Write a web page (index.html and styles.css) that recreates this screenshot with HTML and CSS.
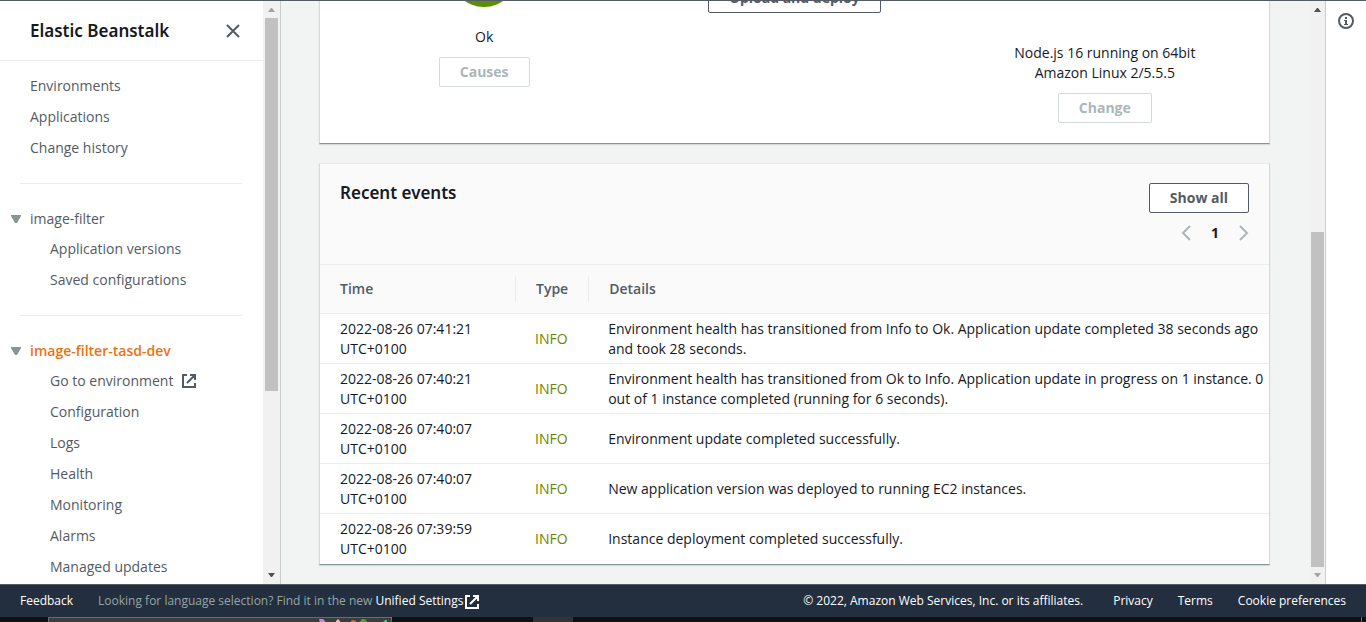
FILE: index.html
```html
<!DOCTYPE html>
<html lang="en">
<head>
<meta charset="utf-8">
<title>Elastic Beanstalk</title>
<link rel="stylesheet" href="styles.css">
</head>
<body>
<div class="workspace">
  <nav class="sidebar" aria-label="Elastic Beanstalk">
    <header class="sidebar-head">
      <a class="service" href="#">Elastic Beanstalk</a>
      <button class="icon-button" type="button" aria-label="Close navigation">
        <svg width="16" height="16" viewBox="0 0 16 16"><path d="M2 2l12 12M14 2L2 14" fill="none" stroke="#545b64" stroke-width="2"/></svg>
      </button>
    </header>
    <ul class="links top-links">
      <li><a href="#">Environments</a></li>
      <li><a href="#">Applications</a></li>
      <li><a href="#">Change history</a></li>
    </ul>
    <hr class="divider">
    <section class="group">
      <div class="group-head"><svg class="caret" width="10" height="8" viewBox="0 0 10 8"><path d="M0 0h10v1L6 8H4L0 1z" fill="#879596"/></svg><a href="#">image-filter</a></div>
      <ul class="links">
        <li><a href="#">Application versions</a></li>
        <li><a href="#">Saved configurations</a></li>
      </ul>
    </section>
    <hr class="divider">
    <section class="group">
      <div class="group-head"><svg class="caret" width="10" height="8" viewBox="0 0 10 8"><path d="M0 0h10v1L6 8H4L0 1z" fill="#879596"/></svg><a class="active" href="#">image-filter-tasd-dev</a></div>
      <ul class="links">
        <li><a class="external" href="#">Go to environment
          <svg width="16" height="16" viewBox="0 0 16 16" fill="none" stroke="#545b64" stroke-width="2"><path d="M6 2H2v12h12v-4M9 2h5v5M14 2L6 10"/></svg></a></li>
        <li><a href="#">Configuration</a></li>
        <li><a href="#">Logs</a></li>
        <li><a href="#">Health</a></li>
        <li><a href="#">Monitoring</a></li>
        <li><a href="#">Alarms</a></li>
        <li><a href="#">Managed updates</a></li>
      </ul>
    </section>
  </nav>
  <div class="scrollbar side-bar" aria-hidden="true">
    <svg width="7" height="4" viewBox="0 0 7 4"><path d="M0 4h7L4 0H3z" fill="#a3a3a3"/></svg>
    <div class="track"><div class="thumb side-thumb"></div></div>
    <svg width="7" height="4" viewBox="0 0 7 4"><path d="M0 0h7L4 4H3z" fill="#505050"/></svg>
  </div>

  <main class="content">
    <section class="card overview">
      <div class="stat">
        <svg class="status" width="66" height="66" viewBox="0 0 66 66"><circle cx="33" cy="33" r="33" fill="#5a8f00"/></svg>
        <p class="status-text">Ok</p>
        <button class="button" type="button" disabled>Causes</button>
      </div>
      <div class="stat version">
        <button class="button" type="button">Upload and deploy</button>
      </div>
      <div class="stat platform">
        <p>Node.js 16 running on 64bit<br>Amazon Linux 2/5.5.5</p>
        <button class="button" type="button" disabled>Change</button>
      </div>
    </section>

    <section class="card events">
      <header class="events-head">
        <h2>Recent events</h2>
        <div class="actions">
          <button class="button" type="button">Show all</button>
          <div class="pager">
            <button class="icon-button" type="button" aria-label="Previous page"><svg width="10" height="16" viewBox="0 0 10 16"><path d="M9 1L2 8l7 7" fill="none" stroke="#aab7b8" stroke-width="2"/></svg></button>
            <button class="page" type="button">1</button>
            <button class="icon-button" type="button" aria-label="Next page"><svg width="10" height="16" viewBox="0 0 10 16"><path d="M1 1l7 7-7 7" fill="none" stroke="#aab7b8" stroke-width="2"/></svg></button>
          </div>
        </div>
      </header>
      <table>
        <thead>
          <tr><th class="time"><span>Time</span></th><th class="type"><span>Type</span></th><th><span>Details</span></th></tr>
        </thead>
        <tbody>
          <tr><td>2022-08-26 07:41:21<br>UTC+0100</td><td class="info">INFO</td><td>Environment health has transitioned from Info to Ok. Application update completed 38 seconds ago and took 28 seconds.</td></tr>
          <tr><td>2022-08-26 07:40:21<br>UTC+0100</td><td class="info">INFO</td><td>Environment health has transitioned from Ok to Info. Application update in progress on 1 instance. 0 out of 1 instance completed (running for 6 seconds).</td></tr>
          <tr><td>2022-08-26 07:40:07<br>UTC+0100</td><td class="info">INFO</td><td>Environment update completed successfully.</td></tr>
          <tr><td>2022-08-26 07:40:07<br>UTC+0100</td><td class="info">INFO</td><td>New application version was deployed to running EC2 instances.</td></tr>
          <tr><td>2022-08-26 07:39:59<br>UTC+0100</td><td class="info">INFO</td><td>Instance deployment completed successfully.</td></tr>
        </tbody>
      </table>
    </section>
  </main>
  <div class="scrollbar main-bar" aria-hidden="true">
    <svg width="7" height="4" viewBox="0 0 7 4"><path d="M0 4h7L4 0H3z" fill="#505050"/></svg>
    <div class="track end"><div class="thumb main-thumb"></div></div>
    <svg width="7" height="4" viewBox="0 0 7 4"><path d="M0 0h7L4 4H3z" fill="#a3a3a3"/></svg>
  </div>
  <aside class="tools">
    <button class="icon-button" type="button" aria-label="Info">
      <svg width="16" height="16" viewBox="0 0 16 16"><circle cx="8" cy="8" r="7" fill="none" stroke="#545b64" stroke-width="2"/><path d="M7 4h2v2H7zM6 7h3v4h1v1H6v-1h1V8H6z" fill="#545b64"/></svg>
    </button>
  </aside>
</div>

<footer class="footer">
  <a class="feedback" href="#">Feedback</a>
  <p class="language">Looking for language selection? Find it in the new <a href="#">Unified Settings<svg width="16" height="16" viewBox="0 0 16 16" fill="none" stroke="#fff" stroke-width="2"><path d="M6 2H2v12h12v-4M9 2h5v5M14 2L6 10"/></svg></a></p>
  <p class="copyright">© 2022, Amazon Web Services, Inc. or its affiliates.</p>
  <a href="#">Privacy</a>
  <a href="#">Terms</a>
  <a href="#">Cookie preferences</a>
</footer>
<div class="taskbar" aria-hidden="true">
  <div class="search"><svg width="72" height="5" viewBox="0 0 72 5"><path d="M0 1h4l2 2v2H1z" fill="#d67be0"/><path d="M17 5V3l2-2 2 2v2z" fill="#f2b8a0"/><path d="M32 5V3l2-1 3 1v2z" fill="#d9702b"/><path d="M40 5l3-4h3l3 4z" fill="#4fa51f"/><path d="M63 5l3-3h2v3z" fill="#3fbf72"/></svg></div>
  <div class="task"></div>
  <div class="peek"></div>
</div>
</body>
</html>
```
FILE: styles.css
```css
* { box-sizing: border-box; }

body {
  margin: 0;
  height: 100vh;
  display: flex;
  flex-direction: column;
  overflow: hidden;
  font: 14px/20px "Open Sans", "Noto Sans", sans-serif;
  color: #16191f;
  background: #fff;
}

p, h2, ul { margin: 0; padding: 0; }
ul { list-style: none; }
svg { display: block; flex: none; }
a { color: inherit; text-decoration: none; }
button { font: inherit; color: inherit; }

.icon-button {
  display: flex;
  padding: 0;
  border: 0;
  background: none;
}

.workspace {
  flex: 1;
  min-height: 0;
  display: flex;
  border-top: 1px solid #545b64;
}

/* Navigation */
.sidebar {
  flex: none;
  width: 263px;
  overflow: hidden;
  color: #545b64;
}

.sidebar-head {
  display: flex;
  align-items: center;
  justify-content: space-between;
  height: 60px;
  padding: 0 22px 0 30px;
  border-bottom: 1px solid #eaeded;
}

.service {
  font-family: "Noto Sans", sans-serif;
  font-size: 17px;
  font-weight: 600;
  color: #16191f;
}

.links {
  display: grid;
  gap: 11px;
}

.top-links { padding: 15px 30px 25px; }

.divider {
  margin: 0 21px 0 20px;
  border: 0;
  border-top: 1px solid #eaeded;
}

.group { padding: 25px 0; }
.group .links { padding: 10px 0 0 50px; }

.group-head {
  display: flex;
  align-items: center;
  gap: 9px;
  padding-left: 11px;
}

.active {
  font-weight: 600;
  color: #ec7211;
}

.external {
  display: flex;
  align-items: center;
  gap: 8px;
}

/* Scrollbars */
.scrollbar {
  flex: none;
  display: flex;
  flex-direction: column;
  align-items: center;
  gap: 6px;
  padding: 7px 0;
  background: #f1f1f1;
}

.side-bar {
  width: 18px;
  border-right: 1px solid #c8cdcd;
}

.main-bar {
  width: 16px;
  border-right: 1px solid #c8cdcd;
}

.track {
  flex: 1;
  display: flex;
  flex-direction: column;
}

.track.end { justify-content: flex-end; }

.thumb {
  width: 13px;
  background: #c1c1c1;
}

.side-thumb { height: 68%; }
.main-thumb { height: 61%; }

.tools {
  flex: none;
  width: 40px;
  padding: 12px;
}

/* Content */
.content {
  flex: 1;
  min-width: 0;
  display: flex;
  flex-direction: column;
  justify-content: flex-end;
  gap: 19px;
  padding: 0 40px 19px 38px;
  overflow: hidden;
  background: #f2f3f3;
}

.card {
  flex: none;
  border: 1px solid #d5dbdb;
  border-top-color: #eaeded;
  border-bottom-color: #879596;
  box-shadow: 0 1px 1px #d5dbdb;
  background: #fff;
}

.overview {
  display: grid;
  grid-template-columns: repeat(3, 1fr);
  gap: 22px;
  align-items: start;
  padding: 20px;
}

.stat {
  display: flex;
  flex-direction: column;
  align-items: center;
  gap: 10px;
  text-align: center;
}

.status-text { padding-top: 10px; }
.version { padding-top: 42px; }
.platform { padding-top: 102px; }

.button {
  height: 30px;
  padding: 0 20px;
  border: 1px solid #545b64;
  border-radius: 2px;
  background: #fff;
  color: #545b64;
  font-weight: 700;
}

.button:disabled {
  border-color: #d5dbdb;
  color: #aab7b8;
}

.events { padding-bottom: 1px; }

.events-head {
  display: flex;
  justify-content: space-between;
  padding: 19px 20px 21px;
  background: #fafafa;
}

.events-head h2 {
  font-family: "Noto Sans", sans-serif;
  font-size: 17px;
  font-weight: 600;
}

.actions {
  display: flex;
  flex-direction: column;
  align-items: flex-end;
  gap: 10px;
}

.pager {
  display: flex;
  align-items: center;
  gap: 20px;
}

.page {
  padding: 0;
  border: 0;
  background: none;
  font-weight: 700;
}

table {
  width: 100%;
  border-collapse: separate;
  border-spacing: 0;
}

th {
  padding: 11px 0;
  border-top: 1px solid #eaeded;
  background: #fafafa;
  color: #545b64;
  font-weight: 600;
  text-align: left;
}

th span {
  display: block;
  padding: 3px 20px;
  border-right: 1px solid #eaeded;
}

th:last-child span { border-right: 0; }
.time { width: 196px; }
.type { width: 73px; }

td {
  padding: 5px 5px 4px 20px;
  border-top: 1px solid #eaeded;
}

td:nth-child(n + 2) { padding-left: 19px; }
.info { padding-right: 0; color: #6b8500; }

/* Footer */
.footer {
  flex: none;
  display: flex;
  align-items: center;
  gap: 25px;
  height: 33px;
  padding: 0 20px;
  background: #232f3e;
  border-top: 1px solid #545b64;
  color: #fff;
  font-size: 12px;
}

.language {
  flex: 1;
  color: #95a5a6;
}

.language a { color: #fff; }

.language svg {
  display: inline-block;
  margin-left: 1px;
  vertical-align: middle;
}

.copyright { padding-right: 5px; }

.taskbar {
  flex: none;
  display: flex;
  justify-content: space-between;
  height: 5px;
  padding-left: 48px;
  background: #101010;
}

.search {
  display: flex;
  justify-content: flex-end;
  width: 344px;
  border: 1px solid #6b6b6b;
  border-bottom: 0;
  background: #3d3d3d;
}

.task {
  width: 40px;
  margin-left: 141px;
  margin-right: auto;
  background: #333;
}

.peek {
  width: 5px;
  border-left: 1px solid #6b6b6b;
}
```
